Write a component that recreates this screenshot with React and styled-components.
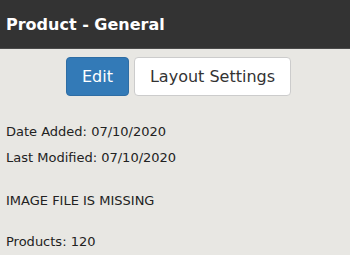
import React from "react";
import styled, { createGlobalStyle } from "styled-components";

const Global = createGlobalStyle`
  html, body { margin: 0; padding: 0; background: #e8e7e3; }
  body { font-family: "DejaVu Sans", Verdana, sans-serif; color: #222; }
`;

const Page = styled.div`
  width: 350px;
  min-height: 255px;
  background: #e8e7e3;
`;

const Header = styled.header`
  height: 49px;
  background: #333333;
  border-bottom: 1px solid #4a4a4a;
  display: flex;
  align-items: center;
  padding-left: 6px;
  box-sizing: border-box;
`;

const Title = styled.h1`
  margin: 0;
  color: #fff;
  font-size: 16px;
  font-weight: bold;
  letter-spacing: 0;
`;

const Toolbar = styled.div`
  display: flex;
  justify-content: center;
  gap: 5px;
  padding: 8px 0 0 7px;
`;

const Button = styled.button`
  height: 39px;
  box-sizing: border-box;
  padding: 0 15px;
  border-radius: 4px;
  font-family: inherit;
  font-size: 16px;
  border: 1px solid ${(p) => (p.$primary ? "#2e6da4" : "#cccccc")};
  background: ${(p) => (p.$primary ? "#337ab7" : "#ffffff")};
  color: ${(p) => (p.$primary ? "#ffffff" : "#333333")};
`;

const Info = styled.div`
  padding: 27px 6px 0;
  font-size: 13px;
`;

const Line = styled.p`
  margin: 0 0 ${(p) => p.$gap || 9}px;
  line-height: 17px;
`;

export default function App() {
  return (
    <Page>
      <Global />
      <Header>
        <Title>Product - General</Title>
      </Header>
      <Toolbar>
        <Button $primary>Edit</Button>
        <Button>Layout Settings</Button>
      </Toolbar>
      <Info>
        <Line>Date Added: 07/10/2020</Line>
        <Line $gap={26}>Last Modified: 07/10/2020</Line>
        <Line $gap={24}>IMAGE FILE IS MISSING</Line>
        <Line>Products: 120</Line>
      </Info>
    </Page>
  );
}
